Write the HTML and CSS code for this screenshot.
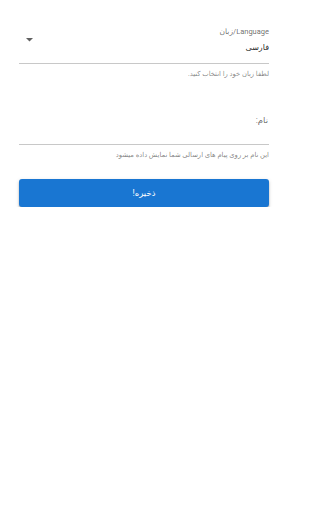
FILE: index.html
```html
<!DOCTYPE html>
<html lang="fa">
<head>
<meta charset="utf-8">
<link rel="stylesheet" href="styles.css">
</head>
<body>
<div class="page" dir="rtl">
  <div class="field">
    <div class="select">
      <div class="select-text">
        <div class="label">Language/زبان</div>
        <div class="value">فارسی</div>
      </div>
      <svg class="arrow" width="7" height="4" viewBox="0 0 7 4"><path d="M0 0 L7 0 L3.5 3.5 Z" fill="#616161"/></svg>
    </div>
    <div class="helper">لطفا زبان خود را انتخاب کنید.</div>
  </div>
  <div class="field name-field">
    <div class="input">
      <div class="label-lg">نام:</div>
    </div>
    <div class="helper">این نام بر روی پیام های ارسالی شما نمایش داده میشود</div>
  </div>
  <button class="save">ذخیره!</button>
</div>
</body>
</html>
```
FILE: styles.css
```css
html, body { margin: 0; padding: 0; background: #fff; }
body { width: 288px; font-family: Roboto, "Noto Sans", "DejaVu Sans", sans-serif; color: rgba(0,0,0,0.87); }
.page { width: 250px; padding: 26px 19px 0 19px; display: flex; flex-direction: column; }
.select { display: flex; align-items: flex-start; justify-content: space-between; border-bottom: 1px solid #c8c8c8; height: 37px; }
.select-text { display: flex; flex-direction: column; }
.label { font-size: 7.5px; line-height: 12px; color: rgba(0,0,0,0.6); }
.value { font-size: 8px; line-height: 14px; margin-top: 3px; color: rgba(0,0,0,0.87); }
.arrow { margin-top: 12px; margin-left: 7px; }
.helper { font-size: 6.8px; line-height: 10px; color: rgba(0,0,0,0.5); margin-top: 5px; }
.name-field { margin-top: 26px; }
.input { border-bottom: 1px solid #c8c8c8; height: 31px; }
.label-lg { font-size: 8.5px; line-height: 14px; color: rgba(0,0,0,0.6); margin-top: 8px; margin-right: 1px; }
.save { margin-top: 19px; height: 28px; border: none; border-radius: 3px; background: #1976d2; color: #fff; font-family: inherit; font-size: 8.5px; box-shadow: 0 2px 2px rgba(0,0,0,0.25), 0 1px 4px rgba(0,0,0,0.12); padding: 0; }
```
